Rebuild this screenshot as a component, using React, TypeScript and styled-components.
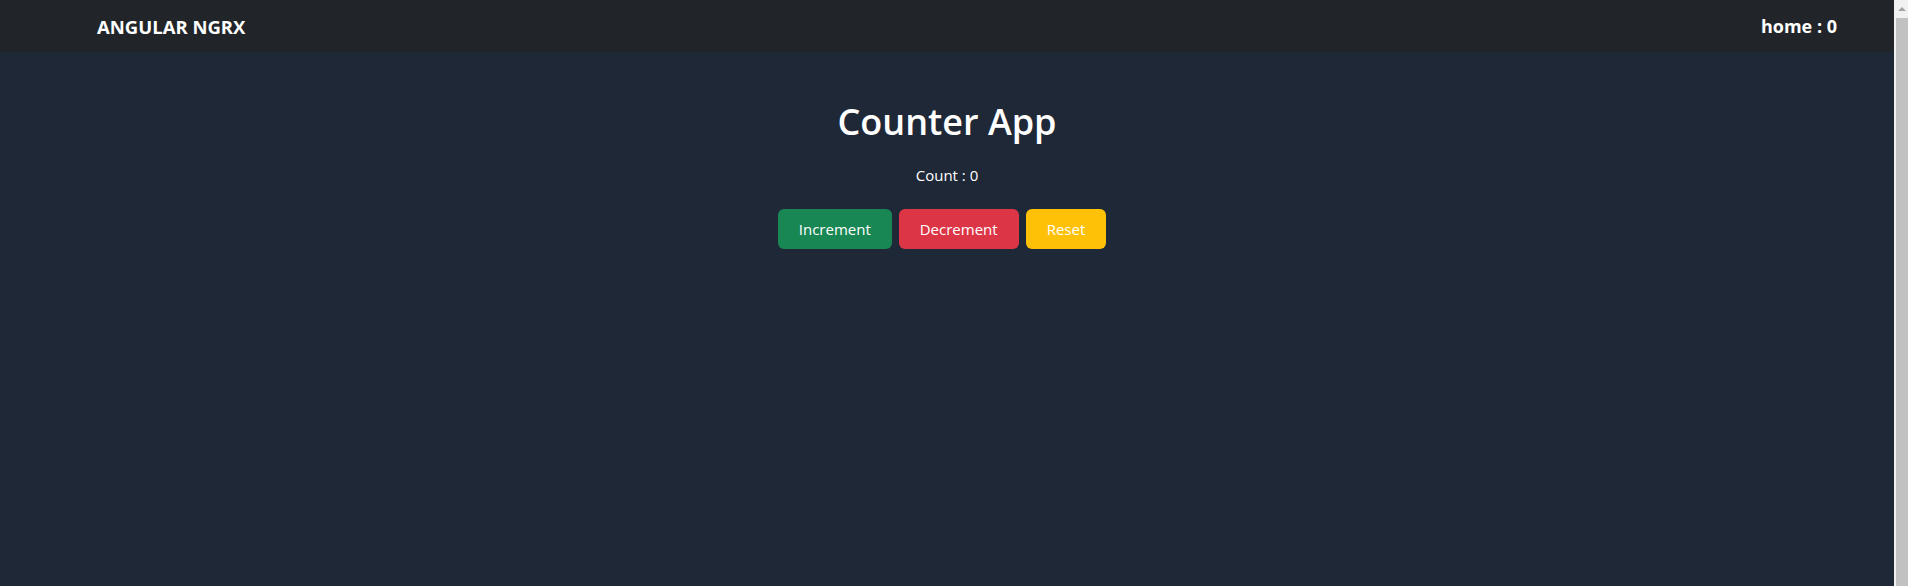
import { useState } from 'react';
import styled, { createGlobalStyle } from "styled-components";

const GlobalStyle = createGlobalStyle`
    html, body{
        margin: 0;
        height: 100%;
        overflow: hidden;
    }
    body{
        font-family: "Open Sans", "Noto Sans", sans-serif;
        background-color: #1f2837;
        color: #ffffff;
    }
    #root{
        height: 100%;
        margin-right: 14px;
    }
`

const App:React.FC = () => {

    const [ count, setCount ] = useState<number>(0);

    return(
        <>
            <GlobalStyle />
            <Page>
                <Navbar>
                    <Brand>ANGULAR NGRX</Brand>
                    <HomeLink>home : {count}</HomeLink>
                </Navbar>
                <Main>
                    <Title>Counter App</Title>
                    <CountText>Count : {count}</CountText>
                    <ButtonRow>
                        <Button variant="green" onClick={() => setCount(count + 1)}>Increment</Button>
                        <Button variant="red" onClick={() => setCount(count - 1)}>Decrement</Button>
                        <Button variant="yellow" onClick={() => setCount(0)}>Reset</Button>
                    </ButtonRow>
                </Main>
            </Page>
            <ScrollTrack>
                <ScrollArrow />
                <ScrollThumb />
            </ScrollTrack>
        </>
    )
}

export default App;

const colors: Record<string, string> = {
    green: '#198754',
    red: '#dc3545',
    yellow: '#ffc107',
}

const Page = styled.div`
    height: 100%;
    display: flex;
    flex-direction: column;
`
const Navbar = styled.nav`
    flex: 0 0 52px;
    background-color: #212529;
    display: flex;
    flex-direction: row;
    align-items: center;
    justify-content: space-between;
    padding: 0 57px 0 97px;
`
const Brand = styled.div`
    font-size: 18.5px;
    font-weight: 700;
`
const HomeLink = styled.div`
    font-size: 18px;
    font-weight: 700;
`
const Main = styled.main`
    flex: 1;
    display: flex;
    flex-direction: column;
    align-items: center;
    padding-top: 48px;
`
const Title = styled.h1`
    margin: 0;
    font-size: 36px;
    font-weight: 600;
    line-height: 1.2;
`
const CountText = styled.p`
    margin: 22px 0 0;
    font-size: 15px;
`
const ButtonRow = styled.div`
    margin-top: 24px;
    padding-right: 10px;
    display: flex;
    flex-direction: row;
    gap: 7px;
`
const Button = styled.button<{ variant: string }>`
    height: 40px;
    padding: 0 21px;
    border: none;
    border-radius: 6px;
    background-color: ${(props) => colors[props.variant]};
    color: #ffffff;
    font-family: inherit;
    font-size: 15px;
    cursor: pointer;
`
const ScrollTrack = styled.div`
    position: fixed;
    top: 0;
    right: 0;
    bottom: 0;
    width: 14px;
    background-color: #f1f1f1;
    display: flex;
    flex-direction: column;
    align-items: flex-end;
`
const ScrollArrow = styled.div`
    flex: 0 0 18px;
    width: 12px;
    display: flex;
    align-items: center;
    justify-content: center;
    &::before{
        content: '';
        border-left: 4px solid transparent;
        border-right: 4px solid transparent;
        border-bottom: 4px solid #a3a3a3;
    }
`
const ScrollThumb = styled.div`
    flex: 1;
    width: 12px;
    background-color: #c1c1c1;
`
